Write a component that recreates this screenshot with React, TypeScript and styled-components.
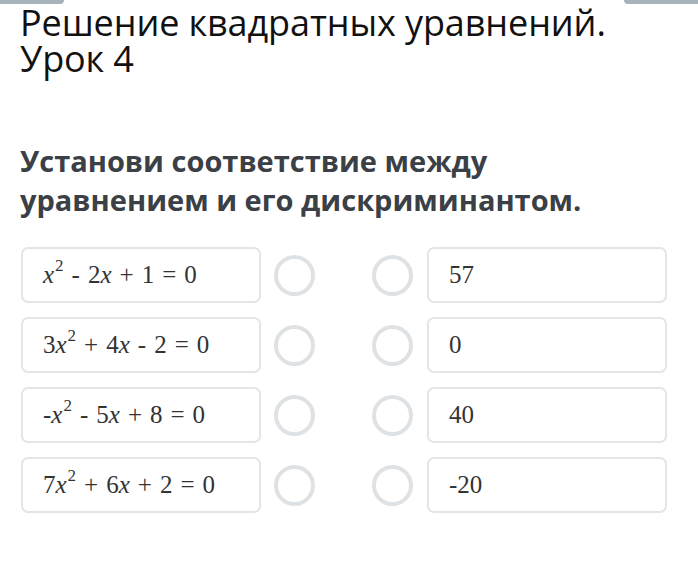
import React from "react";
import styled, { createGlobalStyle } from "styled-components";

const Global = createGlobalStyle`
  html, body { margin: 0; padding: 0; background: #ffffff; }
  body { font-family: "Open Sans", "Noto Sans", sans-serif; }
`;

const Page = styled.div`
  position: relative;
  width: 698px;
  height: 575px;
  overflow: hidden;
  background: #fff;
  padding: 0 20px;
  box-sizing: border-box;
`;

const Tab = styled.div<{ $side: "left" | "right" }>`
  position: absolute;
  top: 0;
  ${(p) => (p.$side === "left" ? "left: 0; width: 64px; border-radius: 0 0 6px 0;" : "right: 0; width: 74px; border-radius: 0 0 0 6px;")}
  height: 4px;
  background: #a7b3ba;
`;

const Title = styled.h1`
  margin: 5px 0 0;
  font-weight: 400;
  font-size: 36px;
  line-height: 36px;
  color: #111;
  letter-spacing: -0.1px;
`;

const Question = styled.h2`
  margin: 64px 0 0;
  font-weight: 700;
  font-size: 29px;
  line-height: 39px;
  color: #3b3f46;
`;

const Board = styled.div`
  margin-top: 28px;
  display: grid;
  grid-template-columns: 240px 1fr 240px;
  row-gap: 14px;
  margin-left: 1px;
  width: 646px;
`;

const Card = styled.div`
  height: 56px;
  box-sizing: border-box;
  border: 2px solid #e3e5e7;
  border-radius: 7px;
  display: flex;
  align-items: center;
  padding-left: 20px;
  font-family: "Liberation Serif", "DejaVu Serif", serif;
  font-size: 25px;
  color: #333;
  white-space: nowrap;
`;

const Mid = styled.div`
  display: flex;
  align-items: center;
  justify-content: space-between;
  padding: 0 14px 0 13px;
`;

const Dot = styled.div`
  width: 41px;
  height: 41px;
  box-sizing: border-box;
  border-radius: 50%;
  border: 4px solid #dfe2e5;
`;

const V = styled.i`
  font-style: italic;
`;

const Op = styled.span`
  margin: 0 8px;
`;

const Sup = styled.sup`
  font-size: 17px;
  vertical-align: 0;
  position: relative;
  top: -9px;
  margin-left: 1px;
`;

type Term = React.ReactNode;

const left: Term[] = [
  <>
    <V>x</V><Sup>2</Sup><Op>-</Op>2<V>x</V><Op>+</Op>1<Op>=</Op>0
  </>,
  <>
    3<V>x</V><Sup>2</Sup><Op>+</Op>4<V>x</V><Op>-</Op>2<Op>=</Op>0
  </>,
  <>
    -<V>x</V><Sup>2</Sup><Op>-</Op>5<V>x</V><Op>+</Op>8<Op>=</Op>0
  </>,
  <>
    7<V>x</V><Sup>2</Sup><Op>+</Op>6<V>x</V><Op>+</Op>2<Op>=</Op>0
  </>,
];

const right = ["57", "0", "40", "-20"];

export default function App() {
  return (
    <Page>
      <Global />
      <Tab $side="left" />
      <Tab $side="right" />
      <Title>
        Решение квадратных уравнений.
        <br />
        Урок 4
      </Title>
      <Question>
        Установи соответствие между
        <br />
        уравнением и его дискриминантом.
      </Question>
      <Board>
        {left.map((l, i) => (
          <React.Fragment key={i}>
            <Card>{l}</Card>
            <Mid>
              <Dot />
              <Dot />
            </Mid>
            <Card>{right[i]}</Card>
          </React.Fragment>
        ))}
      </Board>
    </Page>
  );
}
